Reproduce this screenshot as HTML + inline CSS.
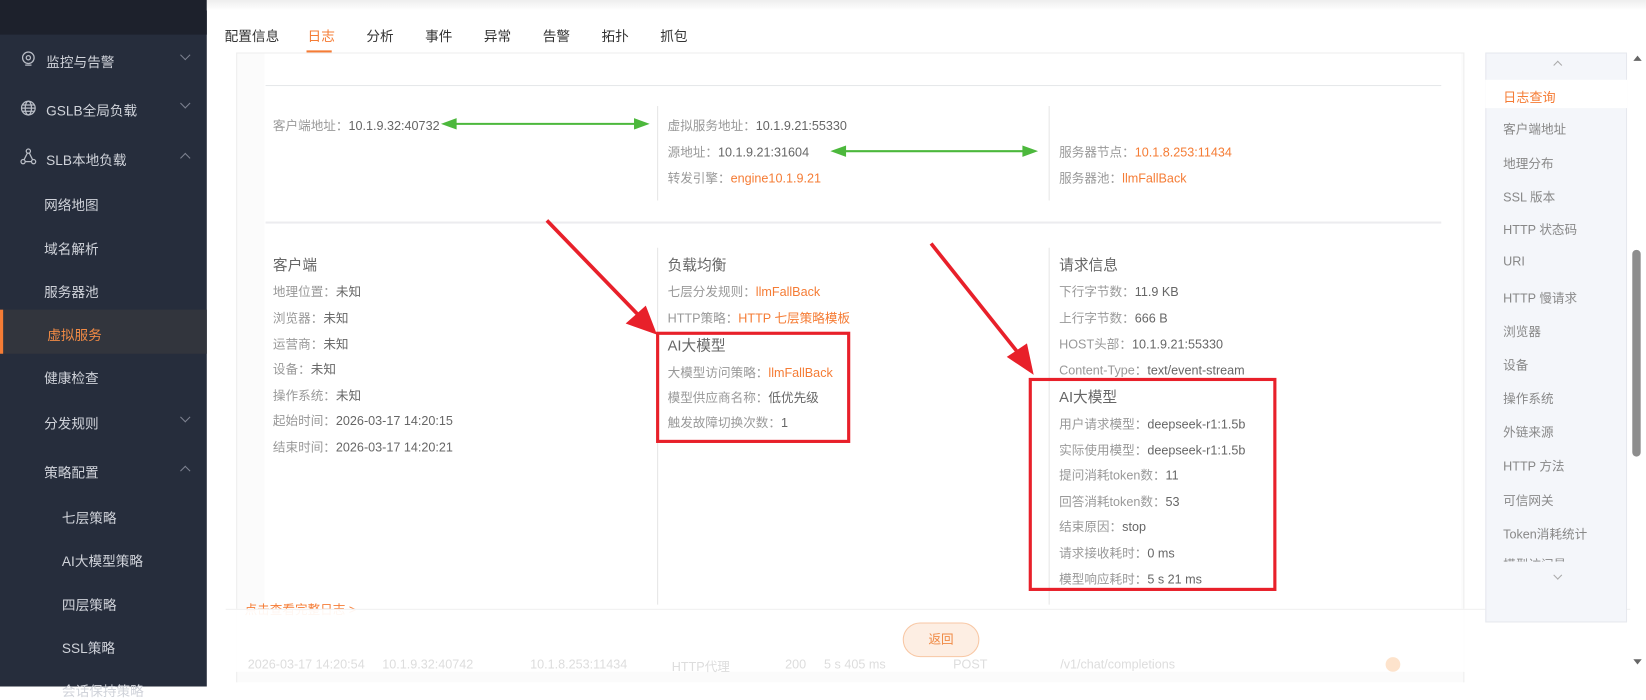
<!DOCTYPE html>
<html><head><meta charset="utf-8"><style>
*{margin:0;padding:0;box-sizing:border-box}
body{width:1646px;height:686px;overflow:hidden;background:#fff;font-family:"Liberation Sans","Noto Sans CJK SC",sans-serif;position:relative}
#w{position:absolute;left:0;top:0;width:1568px;height:654px;transform:scale(1.0497);transform-origin:0 0}
.a{position:absolute;white-space:nowrap}
#side{position:absolute;left:0;top:0;width:197px;height:654px;background:#262d3c}
#side .top{position:absolute;left:0;top:0;width:197px;height:33px;background:#1d212c}
.si{position:absolute;color:#d0d3da;font-size:13px}
.chev{position:absolute;left:173px;width:7px;height:7px;border-right:1px solid #7d8290;border-bottom:1px solid #7d8290}
.t{font-size:13px;color:#333}
.l{font-size:12px;color:#999}
.l b{font-weight:normal;color:#666}
.l i{font-style:normal;color:#f57c35}
.h{font-size:14px;color:#666}
.rn{position:absolute;left:1432px;font-size:12px;color:#888}
</style></head><body><div id="w">
<div id="side"><div class="top"></div>
<svg class="a" style="left:19px;top:48px" width="16" height="16" viewBox="0 0 16 16" fill="none" stroke="#b9bdc6" stroke-width="1.2"><circle cx="8" cy="7" r="5.5"/><circle cx="8" cy="7" r="2"/><path d="M5 14h6"/></svg>
<div class="si" style="left:44px;top:49px">监控与告警</div><div class="chev" style="top:49px;transform:rotate(45deg)"></div>
<svg class="a" style="left:19px;top:95px" width="16" height="16" viewBox="0 0 16 16" fill="none" stroke="#b9bdc6" stroke-width="1.2"><circle cx="8" cy="8" r="6.5"/><ellipse cx="8" cy="8" rx="3" ry="6.5"/><path d="M1.5 8h13M2.5 5h11M2.5 11h11"/></svg>
<div class="si" style="left:44px;top:95px">GSLB全局负载</div><div class="chev" style="top:95px;transform:rotate(45deg)"></div>
<svg class="a" style="left:19px;top:141px" width="16" height="16" viewBox="0 0 16 16" fill="none" stroke="#b9bdc6" stroke-width="1.2"><circle cx="8" cy="3" r="2"/><circle cx="3" cy="13" r="2"/><circle cx="13" cy="13" r="2"/><path d="M7 5L4 11M9 5l3 6M5 13h6"/></svg>
<div class="si" style="left:44px;top:142px">SLB本地负载</div><div class="chev" style="top:147px;transform:rotate(-135deg)"></div>
<div class="si" style="left:42px;top:185px">网络地图</div>
<div class="si" style="left:42px;top:227px">域名解析</div>
<div class="si" style="left:42px;top:268px">服务器池</div>
<div class="a" style="left:0;top:295px;width:197px;height:42px;background:#32353d;border-left:3px solid #f57c35"></div>
<div class="si" style="left:45px;top:309px;color:#f08a45">虚拟服务</div>
<div class="si" style="left:42px;top:350px">健康检查</div>
<div class="si" style="left:42px;top:393px">分发规则</div><div class="chev" style="top:394px;transform:rotate(45deg)"></div>
<div class="si" style="left:42px;top:440px">策略配置</div><div class="chev" style="top:445px;transform:rotate(-135deg)"></div>
<div class="si" style="left:59px;top:483px">七层策略</div>
<div class="si" style="left:59px;top:524px">AI大模型策略</div>
<div class="si" style="left:59px;top:566px">四层策略</div>
<div class="si" style="left:59px;top:607px">SSL策略</div>
<div class="si" style="left:59px;top:648px">会话保持策略</div>
</div>
<div class="a" style="left:197px;top:0;width:1371px;height:10px;background:linear-gradient(#eee,#fff)"></div>
<div class="a t" style="left:214px;top:24px">配置信息</div>
<div class="a t" style="left:293px;top:24px;color:#f57c35">日志</div>
<div class="a" style="left:292px;top:48px;width:24px;height:2px;background:#f57c35"></div>
<div class="a t" style="left:349px;top:24px">分析</div>
<div class="a t" style="left:405px;top:24px">事件</div>
<div class="a t" style="left:461px;top:24px">异常</div>
<div class="a t" style="left:517px;top:24px">告警</div>
<div class="a t" style="left:573px;top:24px">拓扑</div>
<div class="a t" style="left:629px;top:24px">抓包</div>
<div class="a" style="left:225px;top:50px;width:1170px;height:600px;border:1px solid #eee;border-bottom:none;background:#fbfbfb"></div>
<div class="a" style="left:252px;top:51px;width:1140px;height:560px;background:#fff"></div>
<div class="a" style="left:253px;top:81px;width:1120px;height:1px;background:#e6e7ea"></div>
<div class="a" style="left:253px;top:211px;width:1120px;height:2px;background:#ececef"></div>
<div class="a" style="left:626px;top:101px;width:1px;height:90px;background:#e6e6e6"></div>
<div class="a" style="left:999px;top:101px;width:1px;height:90px;background:#e6e6e6"></div>
<div class="a" style="left:626px;top:236px;width:1px;height:340px;background:#e6e6e6"></div>
<div class="a" style="left:999px;top:236px;width:1px;height:340px;background:#e6e6e6"></div>
<div class="a l" style="left:260px;top:111px">客户端地址：<b>10.1.9.32:40732</b></div>
<div class="a l" style="left:636px;top:111px">虚拟服务地址：<b>10.1.9.21:55330</b></div>
<div class="a l" style="left:636px;top:136px">源地址：<b>10.1.9.21:31604</b></div>
<div class="a l" style="left:636px;top:161px">转发引擎：<i>engine10.1.9.21</i></div>
<div class="a l" style="left:1009px;top:136px">服务器节点：<i>10.1.8.253:11434</i></div>
<div class="a l" style="left:1009px;top:161px">服务器池：<i>llmFallBack</i></div>
<svg class="a" style="left:420px;top:110px" width="580" height="40"><g fill="#4cb83c" stroke="#4cb83c" stroke-width="2"><path d="M10 8H188"/><path d="M3 8l11-4v8z"/><path d="M196 8l-11-4v8z"/><path d="M381 34H558"/><path d="M374 34l11-4v8z"/><path d="M566 34l-11-4v8z"/></g></svg>
<div class="a h" style="left:260px;top:242px">客户端</div>
<div class="a l" style="left:260px;top:269px">地理位置：<b>未知</b></div>
<div class="a l" style="left:260px;top:294px">浏览器：<b>未知</b></div>
<div class="a l" style="left:260px;top:319px">运营商：<b>未知</b></div>
<div class="a l" style="left:260px;top:343px">设备：<b>未知</b></div>
<div class="a l" style="left:260px;top:368px">操作系统：<b>未知</b></div>
<div class="a l" style="left:260px;top:392px">起始时间：<b>2026-03-17 14:20:15</b></div>
<div class="a l" style="left:260px;top:417px">结束时间：<b>2026-03-17 14:20:21</b></div>
<div class="a h" style="left:636px;top:242px">负载均衡</div>
<div class="a l" style="left:636px;top:269px">七层分发规则：<i>llmFallBack</i></div>
<div class="a l" style="left:636px;top:294px">HTTP策略：<i>HTTP 七层策略模板</i></div>
<div class="a h" style="left:636px;top:319px">AI大模型</div>
<div class="a l" style="left:636px;top:346px">大模型访问策略：<i>llmFallBack</i></div>
<div class="a l" style="left:636px;top:370px">模型供应商名称：<b>低优先级</b></div>
<div class="a l" style="left:636px;top:394px">触发故障切换次数：<b>1</b></div>
<div class="a h" style="left:1009px;top:242px">请求信息</div>
<div class="a l" style="left:1009px;top:269px">下行字节数：<b>11.9 KB</b></div>
<div class="a l" style="left:1009px;top:294px">上行字节数：<b>666 B</b></div>
<div class="a l" style="left:1009px;top:319px">HOST头部：<b>10.1.9.21:55330</b></div>
<div class="a l" style="left:1009px;top:344px">Content-Type：<b>text/event-stream</b></div>
<div class="a h" style="left:1009px;top:368px">AI大模型</div>
<div class="a l" style="left:1009px;top:395px">用户请求模型：<b>deepseek-r1:1.5b</b></div>
<div class="a l" style="left:1009px;top:420px">实际使用模型：<b>deepseek-r1:1.5b</b></div>
<div class="a l" style="left:1009px;top:444px">提问消耗token数：<b>11</b></div>
<div class="a l" style="left:1009px;top:469px">回答消耗token数：<b>53</b></div>
<div class="a l" style="left:1009px;top:493px">结束原因：<b>stop</b></div>
<div class="a l" style="left:1009px;top:518px">请求接收耗时：<b>0 ms</b></div>
<div class="a l" style="left:1009px;top:543px">模型响应耗时：<b>5 s 21 ms</b></div>
<div class="a" style="left:625px;top:316px;width:185px;height:106px;border:3px solid #e8202a"></div>
<div class="a" style="left:980px;top:360px;width:236px;height:203px;border:3px solid #e8202a"></div>
<svg class="a" style="left:0;top:0" width="1568" height="654"><g fill="#e8202a" stroke="#e8202a"><path d="M521 210L610 302" stroke-width="3.5"/><path d="M625 318L597 308L615 292Z"/><path d="M887 232L973 340" stroke-width="3.5"/><path d="M984 356L960 340L978 328Z"/></g></svg>
<div class="a" style="left:233px;top:572px;font-size:12px;color:#f57c35">点击查看完整日志 &gt;</div>
<div class="a" style="left:215px;top:580px;width:1350px;height:60px;background:rgba(255,255,255,.93);border-top:1px solid #f0f0f0"></div>
<div class="a" style="left:860px;top:593px;width:73px;height:33px;border-radius:17px;background:#fdeee3;border:1px solid #f8c7a4;color:#f08a45;font-size:12px;text-align:center;line-height:31px">返回</div>
<div class="a" style="left:236px;top:626px;font-size:12px;color:#ddd">2026-03-17 14:20:54 &nbsp;&nbsp;&nbsp; 10.1.9.32:40742</div>
<div class="a" style="left:505px;top:626px;font-size:12px;color:#ddd">10.1.8.253:11434</div>
<div class="a" style="left:640px;top:626px;font-size:12px;color:#ddd">HTTP代理</div>
<div class="a" style="left:748px;top:626px;font-size:12px;color:#ddd">200</div>
<div class="a" style="left:785px;top:626px;font-size:12px;color:#ddd">5 s 405 ms</div>
<div class="a" style="left:908px;top:626px;font-size:12px;color:#ddd">POST</div>
<div class="a" style="left:1010px;top:626px;font-size:12px;color:#ddd">/v1/chat/completions</div>
<div class="a" style="left:1320px;top:626px;width:14px;height:14px;border-radius:7px;background:#fde3cc"></div>
<div class="a" style="left:1415px;top:50px;width:135px;height:543px;background:#f4f6fa;border:1px solid #e6e8ee"></div>
<div class="a" style="left:1481px;top:59px;width:6px;height:6px;border-left:1px solid #aaa;border-top:1px solid #aaa;transform:rotate(45deg)"></div>
<div class="a" style="left:1415px;top:76px;width:135px;height:27px;background:#fff"></div>
<div class="rn" style="top:82px;color:#f57c35;font-size:12.5px">日志查询</div>
<div class="rn" style="top:114px">客户端地址</div>
<div class="rn" style="top:147px">地理分布</div>
<div class="rn" style="top:179px">SSL 版本</div>
<div class="rn" style="top:210px">HTTP 状态码</div>
<div class="rn" style="top:242px">URI</div>
<div class="rn" style="top:275px">HTTP 慢请求</div>
<div class="rn" style="top:307px">浏览器</div>
<div class="rn" style="top:339px">设备</div>
<div class="rn" style="top:371px">操作系统</div>
<div class="rn" style="top:403px">外链来源</div>
<div class="rn" style="top:435px">HTTP 方法</div>
<div class="rn" style="top:468px">可信网关</div>
<div class="rn" style="top:500px">Token消耗统计</div>
<div class="a" style="left:1416px;top:527px;width:133px;height:8px;overflow:hidden"><div class="rn" style="left:16px;top:2px">模型访问量</div></div>
<div class="a" style="left:1481px;top:545px;width:6px;height:6px;border-right:1px solid #aaa;border-bottom:1px solid #aaa;transform:rotate(45deg)"></div>
<div class="a" style="left:1553px;top:50px;width:14px;height:590px;background:#fff"></div>
<div class="a" style="left:1556px;top:53px;width:0;height:0;border-left:4px solid transparent;border-right:4px solid transparent;border-bottom:5px solid #666"></div>
<div class="a" style="left:1555px;top:238px;width:8px;height:197px;border-radius:4px;background:#8d8d8d"></div>
<div class="a" style="left:1556px;top:628px;width:0;height:0;border-left:4px solid transparent;border-right:4px solid transparent;border-top:5px solid #666"></div>
</div></body></html>
